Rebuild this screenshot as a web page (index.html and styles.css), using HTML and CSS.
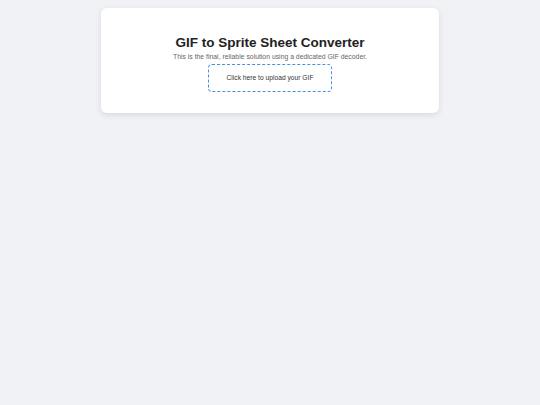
FILE: index.html
```html
<!DOCTYPE html>
<html lang="en">
<head>
    <meta charset="UTF-8">
    <meta name="viewport" content="width=device-width, initial-scale=1.0">
    <title>GIF to Sprite Sheet Converter</title>
    <link rel="stylesheet" href="styles.css">
</head>
<body>
    <div class="container">
        <h1>GIF to Sprite Sheet Converter</h1>
        <p class="subtitle">This is the final, reliable solution using a dedicated GIF decoder.</p>
        <label class="upload-label" for="gif-input">Click here to upload your GIF</label>
        <input type="file" id="gif-input" accept="image/gif">
    </div>
</body>
</html>
```

FILE: styles.css
```css
body {
    font-family: "Liberation Sans", Arial, sans-serif;
    background-color: #f0f2f5;
    color: #222;
    margin: 0;
    padding: 8px;
}
.container {
    background-color: #ffffff;
    max-width: 338px;
    margin: 0 auto;
    padding: 20px 20px 21px;
    border-radius: 6px;
    box-shadow: 0 2px 6px rgba(0, 0, 0, 0.1);
    text-align: center;
    box-sizing: border-box;
}
.container h1 {
    font-size: 13.5px;
    margin: 6.5px 0 3.5px;
    color: #222;
}
.subtitle {
    font-size: 6.85px;
    color: #666;
    margin: 0 0 3.5px;
}
.upload-label {
    display: inline-block;
    font-size: 6.7px;
    line-height: 8px;
    color: #333;
    padding: 9px 17.5px;
    border: 1px dashed #4a90e2;
    border-radius: 4px;
    cursor: pointer;
}
#gif-input {
    display: none;
}
```
